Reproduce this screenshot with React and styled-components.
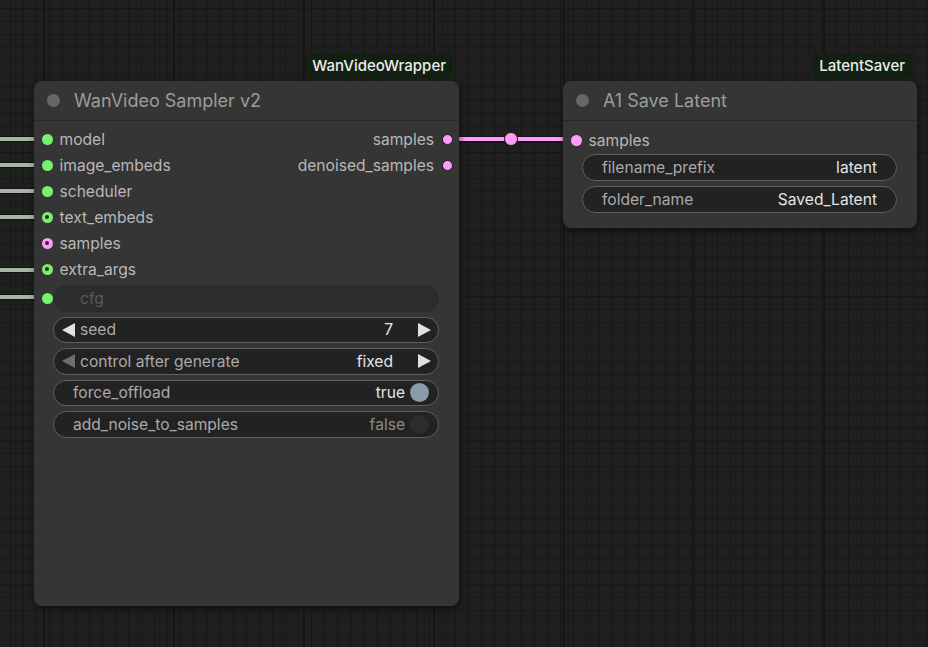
import React from "react";
import styled, { createGlobalStyle } from "styled-components";

const GlobalStyle = createGlobalStyle`
  html, body {
    margin: 0;
    padding: 0;
    background: #1f1f1f;
  }
  body {
    font-family: Inter, "Noto Sans", "Liberation Sans", sans-serif;
  }
`;

// canvas with the litegraph grid
const Canvas = styled.div`
  position: relative;
  width: 928px;
  height: 647px;
  overflow: hidden;
  background-color: #1f1f1f;
  background-image:
    linear-gradient(90deg, #151515 2px, transparent 2px),
    linear-gradient(90deg, #171717 1px, transparent 1px),
    linear-gradient(#171717 1px, transparent 1px);
  background-size: 130px 100%, 13.1px 13.1px, 13.1px 13.1px;
  background-position: 43px 0, 10px 0, 0 8px;
`;

const Links = styled.svg`
  position: absolute;
  left: 0;
  top: 0;
  width: 928px;
  height: 647px;
`;

const Node = styled.div`
  position: absolute;
  left: ${(p) => p.$x}px;
  top: ${(p) => p.$y}px;
  width: ${(p) => p.$w}px;
  height: ${(p) => p.$h}px;
  background: #353535;
  border-radius: 8px;
  box-shadow: 1px 2px 6px rgba(0, 0, 0, 0.55);
  display: flex;
  flex-direction: column;
`;

const Badge = styled.div`
  position: absolute;
  right: ${(p) => p.$right}px;
  bottom: calc(100% + 3px);
  height: 25px;
  padding: 0 7px;
  display: flex;
  align-items: center;
  background: #122012;
  border-radius: 6px;
  color: #ececec;
  font-size: 15px;
  font-weight: 500;
`;

const Title = styled.div`
  height: 39px;
  display: flex;
  align-items: center;
  gap: 14px;
  padding-left: 13px;
  border-bottom: 1px solid #2a2a2a;
  color: #9c9c9c;
  font-size: 18px;
`;

const TitleDot = styled.span`
  width: 13px;
  height: 13px;
  border-radius: 50%;
  background: #676767;
`;

const Body = styled.div`
  padding-top: ${(p) => p.$pt}px;
  display: flex;
  flex-direction: column;
`;

const Slots = styled.div`
  display: flex;
  justify-content: space-between;
`;

const SlotColumn = styled.div`
  display: flex;
  flex-direction: column;
  align-items: ${(p) => (p.$right ? "flex-end" : "flex-start")};
`;

const SlotRow = styled.div`
  height: 26px;
  display: flex;
  align-items: center;
  gap: ${(p) => (p.$right ? 8 : 7)}px;
  padding: ${(p) => (p.$right ? "0 6px 0 0" : "0 0 0 7.5px")};
  color: #b8b8b8;
  font-size: 15.6px;
`;

const Dot = styled.span`
  position: relative;
  width: 11px;
  height: 11px;
  box-sizing: border-box;
  border-radius: 50%;
  background: ${(p) => p.$color};
  border: ${(p) => (p.$outlined ? "1px solid #1a1a1a" : "none")};
  flex-shrink: 0;

  &::after {
    content: "";
    display: ${(p) => (p.$hollow ? "block" : "none")};
    position: absolute;
    left: 50%;
    top: 50%;
    width: 4px;
    height: 4px;
    margin: -2px 0 0 -2px;
    border-radius: 50%;
    background: #2a2a2a;
  }
`;

const Widgets = styled.div`
  margin-top: ${(p) => p.$mt}px;
  padding: 0 20px 0 19px;
  display: flex;
  flex-direction: column;
  gap: ${(p) => p.$gap}px;
`;

const WidgetRow = styled.div`
  position: relative;
`;

const InputDot = styled(Dot)`
  position: absolute;
  left: -11.5px;
  top: 50%;
  margin-top: -5.5px;
`;

const Widget = styled.div`
  height: ${(p) => p.$h}px;
  box-sizing: border-box;
  display: flex;
  align-items: center;
  padding: 0 ${(p) => p.$pr}px 0 ${(p) => p.$pl}px;
  border-radius: 14px;
  background: ${(p) => (p.$disabled ? "#2c2c2c" : "#222222")};
  border: 1px solid ${(p) => (p.$disabled ? "#2c2c2c" : "#5f5f5f")};
  font-size: 15.6px;
`;

const Label = styled.span`
  flex: 1;
  color: ${(p) => (p.$disabled ? "#5a5a5a" : "#aaaaaa")};
`;

const Value = styled.span`
  color: ${(p) => (p.$dim ? "#8a8a8a" : "#e4e4e4")};
`;

const Arrow = styled.span`
  width: 0;
  height: 0;
  border-top: 7px solid transparent;
  border-bottom: 7px solid transparent;
  ${(p) =>
    p.$dir === "left"
      ? `border-right: 13px solid ${p.$dim ? "#6e6e6e" : "#e0e0e0"}; margin-right: 5px;`
      : `border-left: 13px solid ${p.$dim ? "#6e6e6e" : "#e0e0e0"}; margin-left: 25px;`}
`;

const Toggle = styled.span`
  width: 19px;
  height: 19px;
  margin-left: 5px;
  border-radius: 50%;
  background: ${(p) => (p.$on ? "#8a9aab" : "#2c2c2c")};
`;

const GREEN = "#76f26b";
const PINK = "#ff9cf9";

function ComboWidget({ label, value, dimLeft }) {
  return (
    <Widget $h={26.5} $pl={8} $pr={7}>
      <Arrow $dir="left" $dim={dimLeft} />
      <Label>{label}</Label>
      <Value>{value}</Value>
      <Arrow $dir="right" />
    </Widget>
  );
}

function ToggleWidget({ label, on }) {
  return (
    <Widget $h={26.5} $pl={19} $pr={9}>
      <Label>{label}</Label>
      <Value $dim={!on}>{on ? "true" : "false"}</Value>
      <Toggle $on={on} />
    </Widget>
  );
}

function TextWidget({ label, value }) {
  return (
    <Widget $h={26.5} $pl={19} $pr={19}>
      <Label>{label}</Label>
      <Value>{value}</Value>
    </Widget>
  );
}

const samplerInputs = [
  { name: "model" },
  { name: "image_embeds" },
  { name: "scheduler" },
  { name: "text_embeds", hollow: true },
  { name: "samples", hollow: true, pink: true },
  { name: "extra_args", hollow: true },
];

const samplerOutputs = ["samples", "denoised_samples"];

// left side links, y of each connected input
const leftLinks = [139, 165, 191, 217, 270, 297];

export default function App() {
  return (
    <>
      <GlobalStyle />
      <Canvas>
        <Links>
          {leftLinks.map((y) => (
            <g key={y}>
              <line x1="0" y1={y} x2="40" y2={y} stroke="#121212" strokeWidth="6" />
              <line x1="0" y1={y} x2="40" y2={y} stroke="#a7b5a3" strokeWidth="4" />
            </g>
          ))}
          <line x1="447" y1="139.5" x2="576" y2="139.5" stroke="#141014" strokeWidth="6" />
          <line x1="447" y1="139" x2="576" y2="139" stroke={PINK} strokeWidth="4" />
          <circle cx="511" cy="139" r="6.5" fill={PINK} stroke="#1a1a1a" strokeWidth="1" />
        </Links>

        <Node $x={34} $y={81} $w={425} $h={525}>
          <Badge $right={6}>WanVideoWrapper</Badge>
          <Title>
            <TitleDot />
            WanVideo Sampler v2
          </Title>
          <Body $pt={5}>
            <Slots>
              <SlotColumn>
                {samplerInputs.map((s) => (
                  <SlotRow key={s.name}>
                    <Dot $color={s.pink ? PINK : GREEN} $hollow={s.hollow} />
                    {s.name}
                  </SlotRow>
                ))}
              </SlotColumn>
              <SlotColumn $right>
                {samplerOutputs.map((name) => (
                  <SlotRow key={name} $right>
                    {name}
                    <Dot $color={PINK} $outlined />
                  </SlotRow>
                ))}
              </SlotColumn>
            </Slots>
            <Widgets $mt={3} $gap={5}>
              <WidgetRow>
                <InputDot $color={GREEN} />
                <Widget $h={26.5} $pl={26} $pr={19} $disabled>
                  <Label $disabled>cfg</Label>
                </Widget>
              </WidgetRow>
              <ComboWidget label="seed" value="7" />
              <ComboWidget label="control after generate" value="fixed" dimLeft />
              <ToggleWidget label="force_offload" on />
              <ToggleWidget label="add_noise_to_samples" on={false} />
            </Widgets>
          </Body>
        </Node>

        <Node $x={563} $y={81} $w={354} $h={147}>
          <Badge $right={5}>LatentSaver</Badge>
          <Title>
            <TitleDot />
            A1 Save Latent
          </Title>
          <Body $pt={6}>
            <Slots>
              <SlotColumn>
                <SlotRow>
                  <Dot $color={PINK} />
                  samples
                </SlotRow>
              </SlotColumn>
            </Slots>
            <Widgets $mt={1} $gap={5.5}>
              <TextWidget label="filename_prefix" value="latent" />
              <TextWidget label="folder_name" value="Saved_Latent" />
            </Widgets>
          </Body>
        </Node>
      </Canvas>
    </>
  );
}
